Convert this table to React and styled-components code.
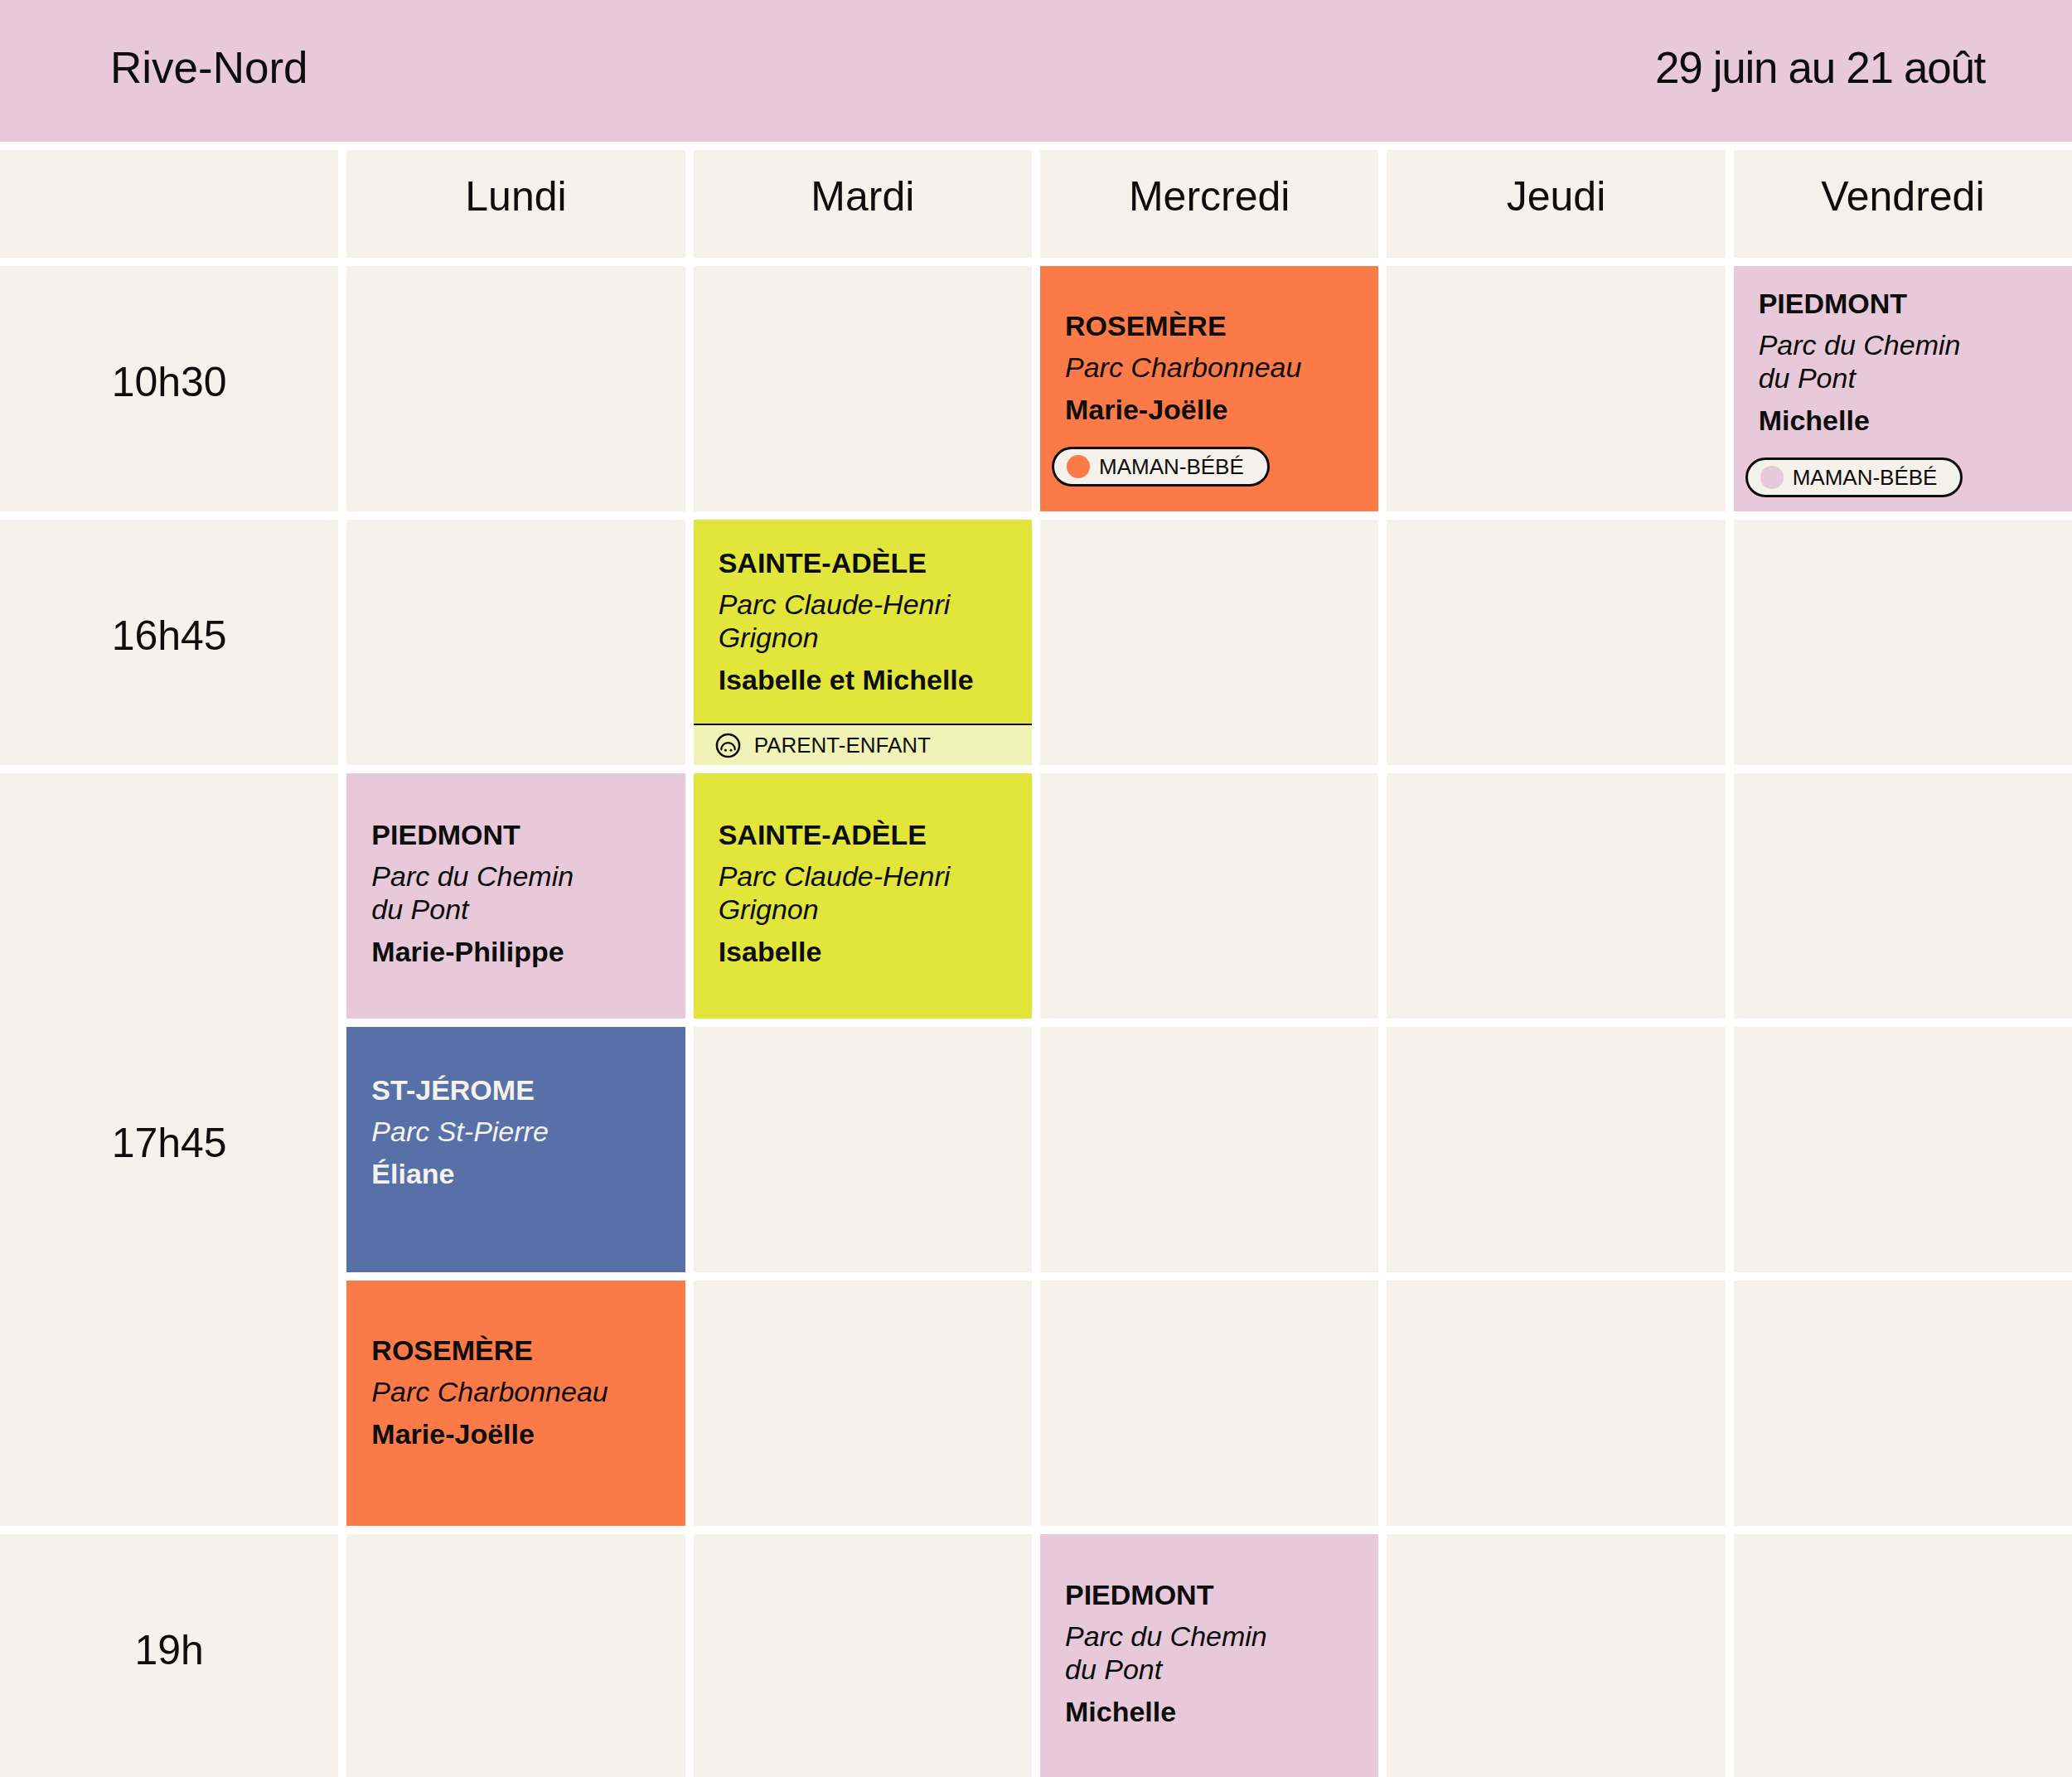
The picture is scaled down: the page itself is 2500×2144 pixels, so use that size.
import React from "react";
import styled, { createGlobalStyle } from "styled-components";

const Global = createGlobalStyle`
  html, body { margin: 0; padding: 0; background: #ffffff; overflow: hidden; }
  body { font-family: "Liberation Sans", Arial, Helvetica, sans-serif; color: #0d0d0d; }
  * { box-sizing: border-box; }
`;

const C = {
  cream: "#f4f2eb",
  pink: "#e8c9da",
  orange: "#fc7a47",
  yellow: "#e3e63a",
  yellowLight: "#f1f2b6",
  blue: "#5770a8",
  ink: "#0d0d0d",
};

const Page = styled.div`
  width: 2500px;
  background: #ffffff;
`;

const TopBar = styled.header`
  height: 171px;
  background: ${C.pink};
  display: flex;
  align-items: center;
  justify-content: space-between;
  padding: 0 105px 9px 133px;
  font-size: 53px;
  font-weight: 400;
`;

const Region = styled.h1`
  margin: 0;
  font-size: inherit;
  font-weight: 400;
`;

const Dates = styled.div`
  letter-spacing: -1.3px;
`;

const Schedule = styled.div`
  margin-top: 10px;
  display: grid;
  grid-template-columns: repeat(6, 1fr);
  grid-template-rows: 130px;
  grid-auto-rows: 296px;
  gap: 10px;
`;

const Cell = styled.div`
  background: ${C.cream};
`;

const DayCell = styled.div`
  background: ${C.cream};
  display: flex;
  align-items: center;
  justify-content: center;
  padding-bottom: 18px;
  font-size: 50px;
`;

const TimeCell = styled.div`
  background: ${C.cream};
  grid-row: span ${(p) => p.$span || 1};
  display: flex;
  align-items: center;
  justify-content: center;
  padding-bottom: 16px;
  font-size: 50px;
`;

const Card = styled.div`
  background: ${(p) => p.$bg};
  color: ${(p) => p.$fg || C.ink};
  display: flex;
  flex-direction: column;
  overflow: hidden;
`;

const CardBody = styled.div`
  flex: 1;
  display: flex;
  flex-direction: column;
  align-items: flex-start;
  padding: ${(p) => p.$top}px 30px 0 30px;
  font-size: 34px;
  line-height: 40px;
`;

const Town = styled.div`
  font-weight: 700;
  text-transform: uppercase;
`;

const Park = styled.div`
  font-style: italic;
  margin-top: 10px;
`;

const Leader = styled.div`
  font-weight: 700;
  margin-top: 11px;
`;

const Badge = styled.div`
  margin-top: 25px;
  margin-left: -16px;
  height: 48px;
  display: inline-flex;
  align-items: center;
  gap: 11px;
  padding: 0 28px 0 15px;
  border: 3px solid ${C.ink};
  border-radius: 24px;
  background: ${C.cream};
  color: ${C.ink};
  font-size: 26px;
  line-height: 1;
  white-space: nowrap;
`;

const Dot = styled.span`
  width: 28px;
  height: 28px;
  border-radius: 50%;
  background: ${(p) => p.$color};
  flex: none;
`;

const Footer = styled.div`
  height: 50px;
  border-top: 2px solid ${C.ink};
  background: ${C.yellowLight};
  display: flex;
  align-items: center;
  gap: 16px;
  padding-left: 26px;
  font-size: 26px;
  color: ${C.ink};
`;

const KidIcon = () => (
  <svg width="31" height="31" viewBox="-16 -16 32 32" aria-hidden="true">
    <circle cx="0" cy="0" r="14" fill="none" stroke={C.ink} strokeWidth="2.6" />
    <path d="M -8.5 5 A 8.5 8.5 0 0 1 8.5 5" fill="none" stroke={C.ink} strokeWidth="2.4" strokeLinecap="round" />
    <circle cx="-3.2" cy="6" r="1.5" fill={C.ink} />
    <circle cx="3.6" cy="6" r="1.5" fill={C.ink} />
  </svg>
);

const Session = ({ bg, fg, top, town, park, leader, badge, footer }) => (
  <Card $bg={bg} $fg={fg}>
    <CardBody $top={top}>
      <Town>{town}</Town>
      <Park>
        {park.map((line, i) => (
          <React.Fragment key={i}>
            {i > 0 && <br />}
            {line}
          </React.Fragment>
        ))}
      </Park>
      <Leader>{leader}</Leader>
      {badge && (
        <Badge>
          <Dot $color={badge.color} />
          {badge.label}
        </Badge>
      )}
    </CardBody>
    {footer && (
      <Footer>
        <KidIcon />
        {footer}
      </Footer>
    )}
  </Card>
);

const days = ["Lundi", "Mardi", "Mercredi", "Jeudi", "Vendredi"];

const piedmont = { town: "Piedmont", park: ["Parc du Chemin", "du Pont"] };
const rosemere = { town: "Rosemère", park: ["Parc Charbonneau"], leader: "Marie-Joëlle" };
const adele = { town: "Sainte-Adèle", park: ["Parc Claude-Henri", "Grignon"] };

export default function App() {
  return (
    <Page>
      <Global />
      <TopBar>
        <Region>Rive-Nord</Region>
        <Dates>29 juin au 21 août</Dates>
      </TopBar>
      <Schedule>
        <Cell />
        {days.map((d) => (
          <DayCell key={d}>{d}</DayCell>
        ))}

        <TimeCell>10h30</TimeCell>
        <Cell />
        <Cell />
        <Session bg={C.orange} top={52} {...rosemere} badge={{ color: C.orange, label: "MAMAN-BÉBÉ" }} />
        <Cell />
        <Session bg={C.pink} top={25} {...piedmont} leader="Michelle" badge={{ color: C.pink, label: "MAMAN-BÉBÉ" }} />

        <TimeCell>16h45</TimeCell>
        <Cell />
        <Session bg={C.yellow} top={32} {...adele} leader="Isabelle et Michelle" footer="PARENT-ENFANT" />
        <Cell />
        <Cell />
        <Cell />

        <TimeCell $span={3}>17h45</TimeCell>
        <Session bg={C.pink} top={54} {...piedmont} leader="Marie-Philippe" />
        <Session bg={C.yellow} top={54} {...adele} leader="Isabelle" />
        <Cell />
        <Cell />
        <Cell />

        <Session bg={C.blue} fg={C.cream} top={56} town="St-Jérome" park={["Parc St-Pierre"]} leader="Éliane" />
        <Cell />
        <Cell />
        <Cell />
        <Cell />

        <Session bg={C.orange} top={64} {...rosemere} />
        <Cell />
        <Cell />
        <Cell />
        <Cell />

        <TimeCell>19h</TimeCell>
        <Cell />
        <Cell />
        <Session bg={C.pink} top={53} {...piedmont} leader="Michelle" />
        <Cell />
        <Cell />
      </Schedule>
    </Page>
  );
}
